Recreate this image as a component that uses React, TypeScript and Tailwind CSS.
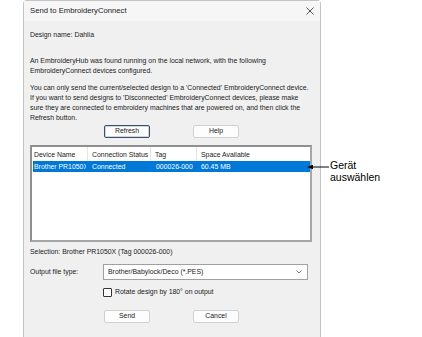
import React from "react";

const btn =
  "h-[13px] w-[46px] flex items-center justify-center bg-[#fdfdfd] border rounded-[2px] text-[6.9px] leading-none text-[#1a1a1a]";

export default function App() {
  return (
    <div
      className="relative w-[422px] h-[337px] bg-white overflow-hidden"
      style={{ fontFamily: '"Liberation Sans", Arial, sans-serif' }}
    >
      <div className="flex">
        <div className="ml-[23px] w-[298px] h-[345px] bg-[#f0f0f0] border-l border-r border-t border-[#c4c4c4] rounded-tl-[4px] rounded-tr-[4px] flex flex-col text-[#1a1a1a]">
          {/* title bar */}
          <div className="h-[20px] shrink-0 bg-[#f6f6f6] flex items-center justify-between pl-[6px] pr-[5px]">
            <span className="text-[7.7px] leading-none">Send to EmbroideryConnect</span>
            <svg width="8" height="8" viewBox="0 0 8 8" className="mr-[1px]">
              <path d="M0.5 0.5 L7.5 7.5 M7.5 0.5 L0.5 7.5" stroke="#444" strokeWidth="0.9" />
            </svg>
          </div>
          {/* body */}
          <div className="flex flex-col px-[6px] text-[6.9px] leading-[10px]">
            <div className="mt-[9px]">Design name: Dahlia</div>
            <div className="mt-[16px]">
              An EmbroideryHub was found running on the local network, with the following
              <br />
              EmbroideryConnect devices configured.
            </div>
            <div className="mt-[7px]">
              You can only send the current/selected design to a 'Connected' EmbroideryConnect device.
              <br />
              If you want to send designs to 'Disconnected' EmbroideryConnect devices, please make
              <br />
              sure they are connected to embroidery machines that are powered on, and then click the
              <br />
              Refresh button.
            </div>
            <div className="flex mt-[2px] pl-[74px] gap-[43px]">
              <div className={btn + " border-[#3f4f66] shadow-[inset_0_0_0_1px_#c9d6e6]"}>Refresh</div>
              <div className={btn + " border-[#d0d0d0]"}>Help</div>
            </div>
            {/* list */}
            <div className="mt-[7px] h-[97px] w-[282px] bg-white border-[2px] border-[#a6a6a6] border-l-[#8f8f8f] border-t-[#8f8f8f] flex flex-col leading-[9px]">
              <div className="flex h-[14px] items-center">
                <div className="w-[56px] pl-[2px] h-full flex items-center border-r border-[#e5e5e5]">Device Name</div>
                <div className="w-[63px] pl-[4px] h-full flex items-center border-r border-[#e5e5e5]">Connection Status</div>
                <div className="w-[46px] pl-[4px] h-full flex items-center border-r border-[#e5e5e5]">Tag</div>
                <div className="flex-1 pl-[4px] h-full flex items-center">Space Available</div>
              </div>
              <div className="flex h-[11px] ml-[1px] items-center bg-[#0078d7] text-white">
                <div className="w-[55px] pl-[1px] pr-[2px] overflow-hidden whitespace-nowrap">
                  <div className="overflow-hidden">Brother PR1050X</div>
                </div>
                <div className="w-[63px] pl-[4px]">Connected</div>
                <div className="w-[46px] pl-[5px]">000026-000</div>
                <div className="flex-1 pl-[4px]">60.45 MB</div>
              </div>
            </div>
            <div className="mt-[5px]">Selection: Brother PR1050X (Tag 000026-000)</div>
            <div className="flex items-center mt-[7px]">
              <div className="w-[73px]">Output file type:</div>
              <div className="w-[205px] h-[16px] bg-white border border-[#a0a0a0] flex items-center justify-between pl-[4px] pr-[5px]">
                <span>Brother/Babylock/Deco (*.PES)</span>
                <svg width="6" height="4" viewBox="0 0 6 4">
                  <path d="M0.5 0.5 L3 3 L5.5 0.5" stroke="#555" strokeWidth="0.8" fill="none" />
                </svg>
              </div>
            </div>
            <div className="flex items-center mt-[7px] pl-[73px]">
              <div className="w-[9px] h-[9px] bg-white border border-[#333] rounded-[1px]" />
              <span className="ml-[3px]">Rotate design by 180° on output</span>
            </div>
            <div className="flex mt-[13px] pl-[74px] gap-[43px]">
              <div className={btn + " border-[#d0d0d0]"}>Send</div>
              <div className={btn + " border-[#d0d0d0]"}>Cancel</div>
            </div>
          </div>
        </div>
      </div>
      {/* callout */}
      <div className="absolute left-[306px] top-[160px] flex items-start">
        <svg width="24" height="14" viewBox="0 0 24 14">
          <path d="M1 7 L7 4.8 L7 9.2 Z" fill="#000" />
          <line x1="6" y1="7" x2="23" y2="7" stroke="#000" strokeWidth="1" />
        </svg>
        <div className="text-[10.5px] leading-[12px] text-black mt-[-1px]">
          Gerät
          <br />
          auswählen
        </div>
      </div>
    </div>
  );
}
